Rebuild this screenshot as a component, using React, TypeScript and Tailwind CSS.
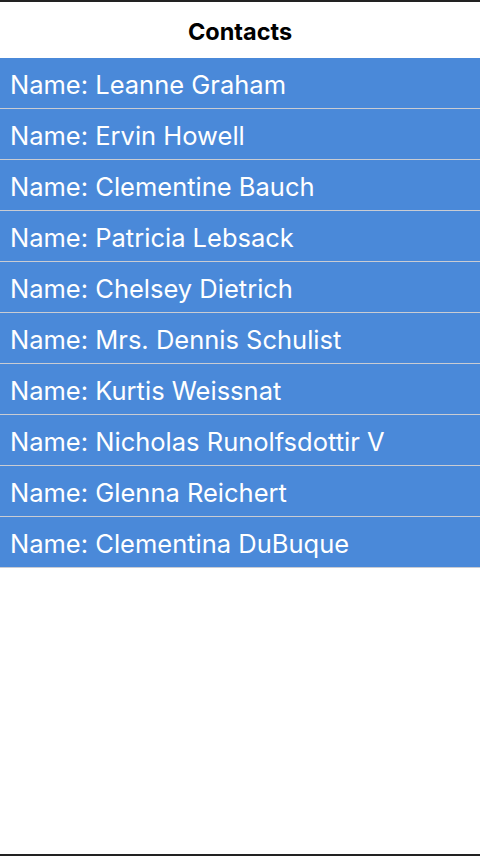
import React from "react";

const names = [
  "Leanne Graham",
  "Ervin Howell",
  "Clementine Bauch",
  "Patricia Lebsack",
  "Chelsey Dietrich",
  "Mrs. Dennis Schulist",
  "Kurtis Weissnat",
  "Nicholas Runolfsdottir V",
  "Glenna Reichert",
  "Clementina DuBuque",
];

export default function App() {
  return (
    <div
      className="w-[480px] h-[856px] flex flex-col bg-white border-y-2 border-[#222222]"
      style={{ fontFamily: "Inter, 'Noto Sans', sans-serif" }}
    >
      <div className="h-[56px] flex items-center justify-center pt-[3px]">
        <span className="text-[23.5px] font-bold text-black">Contacts</span>
      </div>
      <div className="flex flex-col">
        {names.map((n) => (
          <div
            key={n}
            className="h-[51px] flex items-center px-[10px] pt-[4px] bg-[#4a89d9] border-b border-[#c9ccd3] text-white text-[25.5px]"
          >
            Name: {n}
          </div>
        ))}
      </div>
    </div>
  );
}
